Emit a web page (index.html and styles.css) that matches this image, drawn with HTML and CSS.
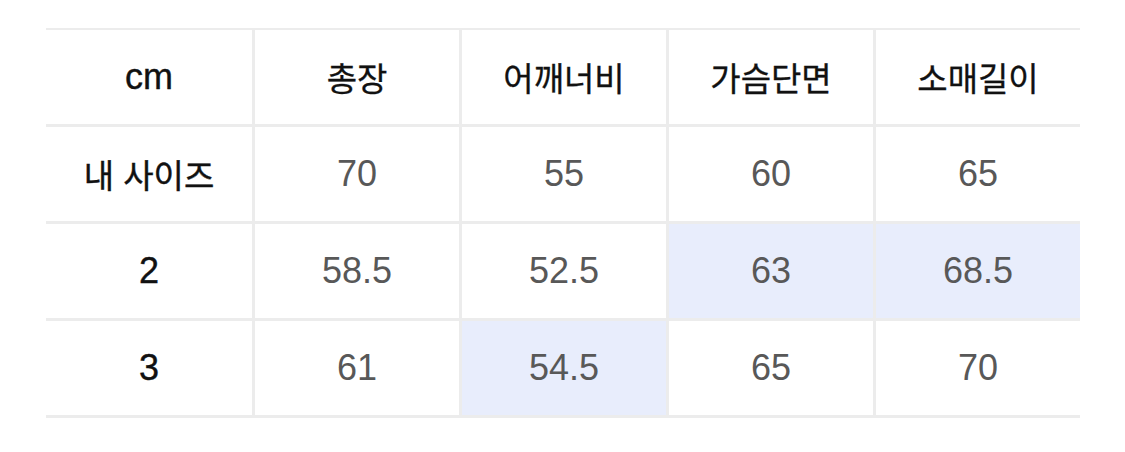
FILE: index.html
```html
<!DOCTYPE html>
<html lang="ko">
<head>
<meta charset="utf-8">
<link rel="stylesheet" href="styles.css">
</head>
<body>
<div class="size-table">
  <div class="cell head label">cm</div>
  <div class="cell head">총장</div>
  <div class="cell head">어깨너비</div>
  <div class="cell head">가슴단면</div>
  <div class="cell head last">소매길이</div>

  <div class="cell label ko">내 사이즈</div>
  <div class="cell val">70</div>
  <div class="cell val">55</div>
  <div class="cell val">60</div>
  <div class="cell val last">65</div>

  <div class="cell label">2</div>
  <div class="cell val">58.5</div>
  <div class="cell val">52.5</div>
  <div class="cell val hl">63</div>
  <div class="cell val hl last">68.5</div>

  <div class="cell label">3</div>
  <div class="cell val">61</div>
  <div class="cell val hl">54.5</div>
  <div class="cell val">65</div>
  <div class="cell val last">70</div>
</div>
</body>
</html>
```
FILE: styles.css
```css
html, body {
  margin: 0;
  padding: 0;
  background: #ffffff;
}
body {
  font-family: "Liberation Sans", "Noto Sans CJK KR", sans-serif;
}
.size-table {
  margin: 28px 0 0 46px;
  width: 1034px;
  display: grid;
  grid-template-columns: 209px 207px 207px 207px 204px;
  grid-auto-rows: 97px;
  border-top: 2px solid #ececec;
}
.cell {
  box-sizing: border-box;
  display: flex;
  align-items: center;
  justify-content: center;
  border-right: 3px solid #ececec;
  border-bottom: 3px solid #ececec;
  font-size: 36px;
  color: #555555;
}
.cell.last {
  border-right: none;
}
.head {
  font-family: "Noto Sans CJK KR", "Liberation Sans", sans-serif;
  font-size: 33px;
  color: #111111;
  font-weight: 400;
  -webkit-text-stroke: 0.3px #111111;
}
.label {
  font-family: "Liberation Sans", "Noto Sans CJK KR", sans-serif;
  color: #111111;
  font-size: 36px;
  -webkit-text-stroke: 0.4px #111111;
}
.label.ko {
  font-family: "Noto Sans CJK KR", sans-serif;
  font-size: 33px;
  font-weight: 400;
  -webkit-text-stroke: 0.4px #111111;
}
.val {
  color: #585858;
}
.hl {
  background: #e8edfc;
}
```
